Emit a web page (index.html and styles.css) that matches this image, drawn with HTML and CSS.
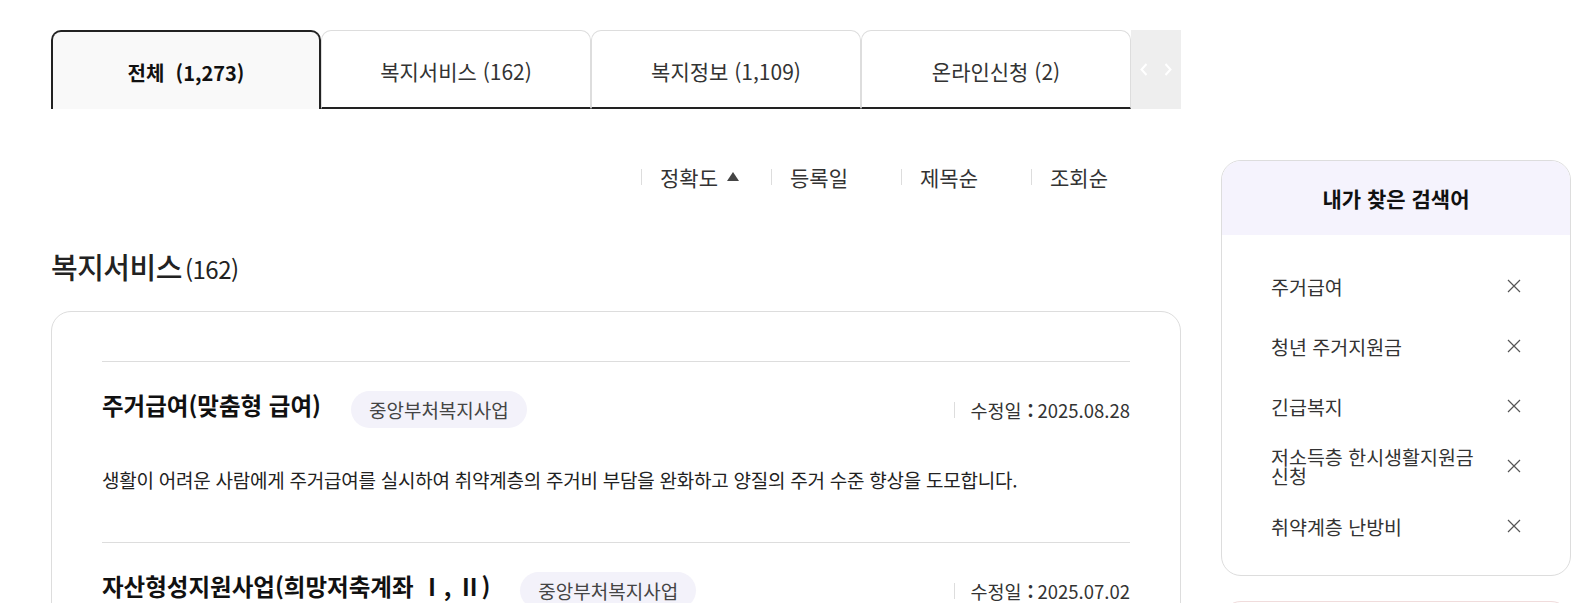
FILE: index.html
```html
<!DOCTYPE html>
<html lang="ko">
<head>
  <meta charset="UTF-8">
  <meta name="viewport" content="width=device-width, initial-scale=1.0">
  <title>통합검색 결과</title>
  <link rel="stylesheet" href="styles.css">
</head>
<body>
  <div class="page">
    <main class="content">
      <div class="tabs">
        <a class="tab active" href="#">전체&nbsp;&nbsp;(1,273)</a>
        <a class="tab" href="#">복지서비스 (162)</a>
        <a class="tab" href="#">복지정보 (1,109)</a>
        <a class="tab" href="#">온라인신청 (2)</a>
        <div class="tab-arrows">
          <svg width="8" height="13" viewBox="0 0 8 13"><path d="M6.5 1 1.5 6.5 6.5 12" fill="none" stroke="#fff" stroke-width="2"/></svg>
          <svg width="8" height="13" viewBox="0 0 8 13"><path d="M1.5 1 6.5 6.5 1.5 12" fill="none" stroke="#fff" stroke-width="2"/></svg>
        </div>
      </div>

      <ul class="sort">
        <li class="on">정확도 <span class="tri"></span></li>
        <li>등록일</li>
        <li>제목순</li>
        <li>조회순</li>
      </ul>

      <h2 class="section-title">복지서비스<span>(162)</span></h2>

      <div class="result-card">
        <div class="result-item">
          <div class="item-head">
            <strong class="item-title">주거급여(맞춤형 급여)</strong>
            <span class="badge">중앙부처복지사업</span>
            <span class="item-date">수정일 <b>:</b>2025.08.28</span>
          </div>
          <p class="item-desc">생활이 어려운 사람에게 주거급여를 실시하여 취약계층의 주거비 부담을 완화하고 양질의 주거 수준 향상을 도모합니다.</p>
        </div>
        <div class="result-item">
          <div class="item-head">
            <strong class="item-title">자산형성지원사업(희망저축계좌 Ⅰ, Ⅱ)</strong>
            <span class="badge">중앙부처복지사업</span>
            <span class="item-date">수정일 <b>:</b>2025.07.02</span>
          </div>
          <p class="item-desc">일하는 저소득층의 자산형성을 지원하여 빈곤에서 벗어날 수 있도록 돕습니다.</p>
        </div>
      </div>
    </main>

    <aside class="side">
      <div class="keyword-box">
        <h3 class="keyword-title">내가 찾은 검색어</h3>
        <ul class="keyword-list">
          <li><span>주거급여</span><button class="del" type="button"><svg width="14" height="14" viewBox="0 0 14 14"><path d="M1 1 13 13M13 1 1 13" stroke="#555" stroke-width="1.2"/></svg></button></li>
          <li><span>청년 주거지원금</span><button class="del" type="button"><svg width="14" height="14" viewBox="0 0 14 14"><path d="M1 1 13 13M13 1 1 13" stroke="#555" stroke-width="1.2"/></svg></button></li>
          <li><span>긴급복지</span><button class="del" type="button"><svg width="14" height="14" viewBox="0 0 14 14"><path d="M1 1 13 13M13 1 1 13" stroke="#555" stroke-width="1.2"/></svg></button></li>
          <li><span>저소득층 한시생활지원금 신청</span><button class="del" type="button"><svg width="14" height="14" viewBox="0 0 14 14"><path d="M1 1 13 13M13 1 1 13" stroke="#555" stroke-width="1.2"/></svg></button></li>
          <li><span>취약계층 난방비</span><button class="del" type="button"><svg width="14" height="14" viewBox="0 0 14 14"><path d="M1 1 13 13M13 1 1 13" stroke="#555" stroke-width="1.2"/></svg></button></li>
        </ul>
      </div>
      <div class="side-box"></div>
    </aside>
  </div>
</body>
</html>
```

FILE: styles.css
```css
html, body {
  margin: 0;
  overflow: hidden;
  background: #fff;
}
body {
  font-family: "Noto Sans CJK KR", "Noto Sans", sans-serif;
  color: #222;
}
ul {
  list-style: none;
  margin: 0;
  padding: 0;
}
.page {
  display: flex;
  gap: 40px;
  padding-left: 51px;
}
.content {
  width: 1130px;
}

/* 탭 */
.tabs {
  display: flex;
  margin-top: 30px;
  height: 79px;
}
.tab {
  box-sizing: border-box;
  width: 270px;
  display: flex;
  justify-content: center;
  align-items: center;
  padding-top: 4px;
  font-size: 21px;
  color: #333;
  text-decoration: none;
  background: #fff;
  border: 1px solid #ddd;
  border-bottom: 2px solid #222;
  border-radius: 10px 10px 0 0;
}
.tab.active {
  font-size: 20px;
  font-weight: 700;
  color: #111;
  background: #f9f9f9;
  border: 2px solid #222;
  border-bottom: none;
}
.tab-arrows {
  width: 50px;
  background: #eee;
  display: flex;
  justify-content: center;
  align-items: center;
  gap: 16px;
}

/* 정렬 */
.sort {
  display: flex;
  justify-content: flex-end;
  padding-right: 20px;
  margin-top: 54px;
}
.sort li {
  width: 130px;
  display: flex;
  align-items: center;
  font-size: 21px;
  line-height: 28px;
  color: #333;
}
.sort li::before {
  content: "";
  display: inline-block;
  width: 1px;
  height: 16px;
  background: #ddd;
  margin-right: 18px;
}
.sort .tri {
  display: inline-block;
  margin-left: 9px;
  border-left: 6px solid transparent;
  border-right: 6px solid transparent;
  border-bottom: 9px solid #444;
  margin-bottom: 2px;
}

.section-title {
  margin: 57px 0 0;
  font-size: 29px;
  font-weight: 500;
  line-height: 36px;
  color: #222;
  letter-spacing: -0.5px;
}
.section-title span {
  font-size: 24px;
  font-weight: 400;
  margin-left: 3px;
}

/* 결과 카드 */
.result-card {
  margin-top: 24px;
  border: 1px solid #ddd;
  border-radius: 20px;
  padding: 49px 50px 0;
}
.result-item {
  border-top: 1px solid #ddd;
  padding: 26px 0 49px;
}
.item-head {
  display: flex;
  align-items: center;
}
.item-title {
  font-size: 23.5px;
  font-weight: 700;
  color: #111;
  margin-bottom: 9px;
}
.badge {
  margin-left: 30px;
  padding: 6px 18px;
  line-height: 25px;
  font-size: 19px;
  color: #444;
  background: #f3f2fa;
  border-radius: 19px;
}
.item-date {
  margin-left: auto;
  display: flex;
  align-items: center;
  font-size: 18.5px;
  color: #333;
}
.item-date::before {
  content: "";
  display: inline-block;
  width: 1px;
  height: 16px;
  background: #ddd;
  margin-right: 15px;
}
.item-date b {
  font-weight: 700;
  margin: 0 4px 0 6px;
}
.item-desc {
  margin: 36px 0 0;
  font-size: 19px;
  line-height: 26px;
  letter-spacing: -0.25px;
  color: #222;
}

/* 사이드 */
.side {
  width: 350px;
  padding-top: 160px;
}
.keyword-box {
  border: 1px solid #ddd;
  border-radius: 20px;
  overflow: hidden;
}
.keyword-title {
  margin: 0;
  height: 74px;
  display: flex;
  justify-content: center;
  align-items: center;
  background: #f5f3fd;
  font-size: 21px;
  font-weight: 700;
  color: #111;
}
.keyword-list {
  padding: 21px 0 19px;
}
.keyword-list li {
  height: 60px;
  display: flex;
  align-items: center;
  gap: 20px;
  padding: 0 49px;
}
.keyword-list li span {
  flex: 1;
  font-size: 19.5px;
  line-height: 19px;
  color: #333;
}
.del {
  border: 0;
  padding: 0;
  background: none;
  display: flex;
}
.side-box {
  margin-top: 25px;
  height: 200px;
  border: 1px solid #f0dcdc;
  border-radius: 20px;
}
```
